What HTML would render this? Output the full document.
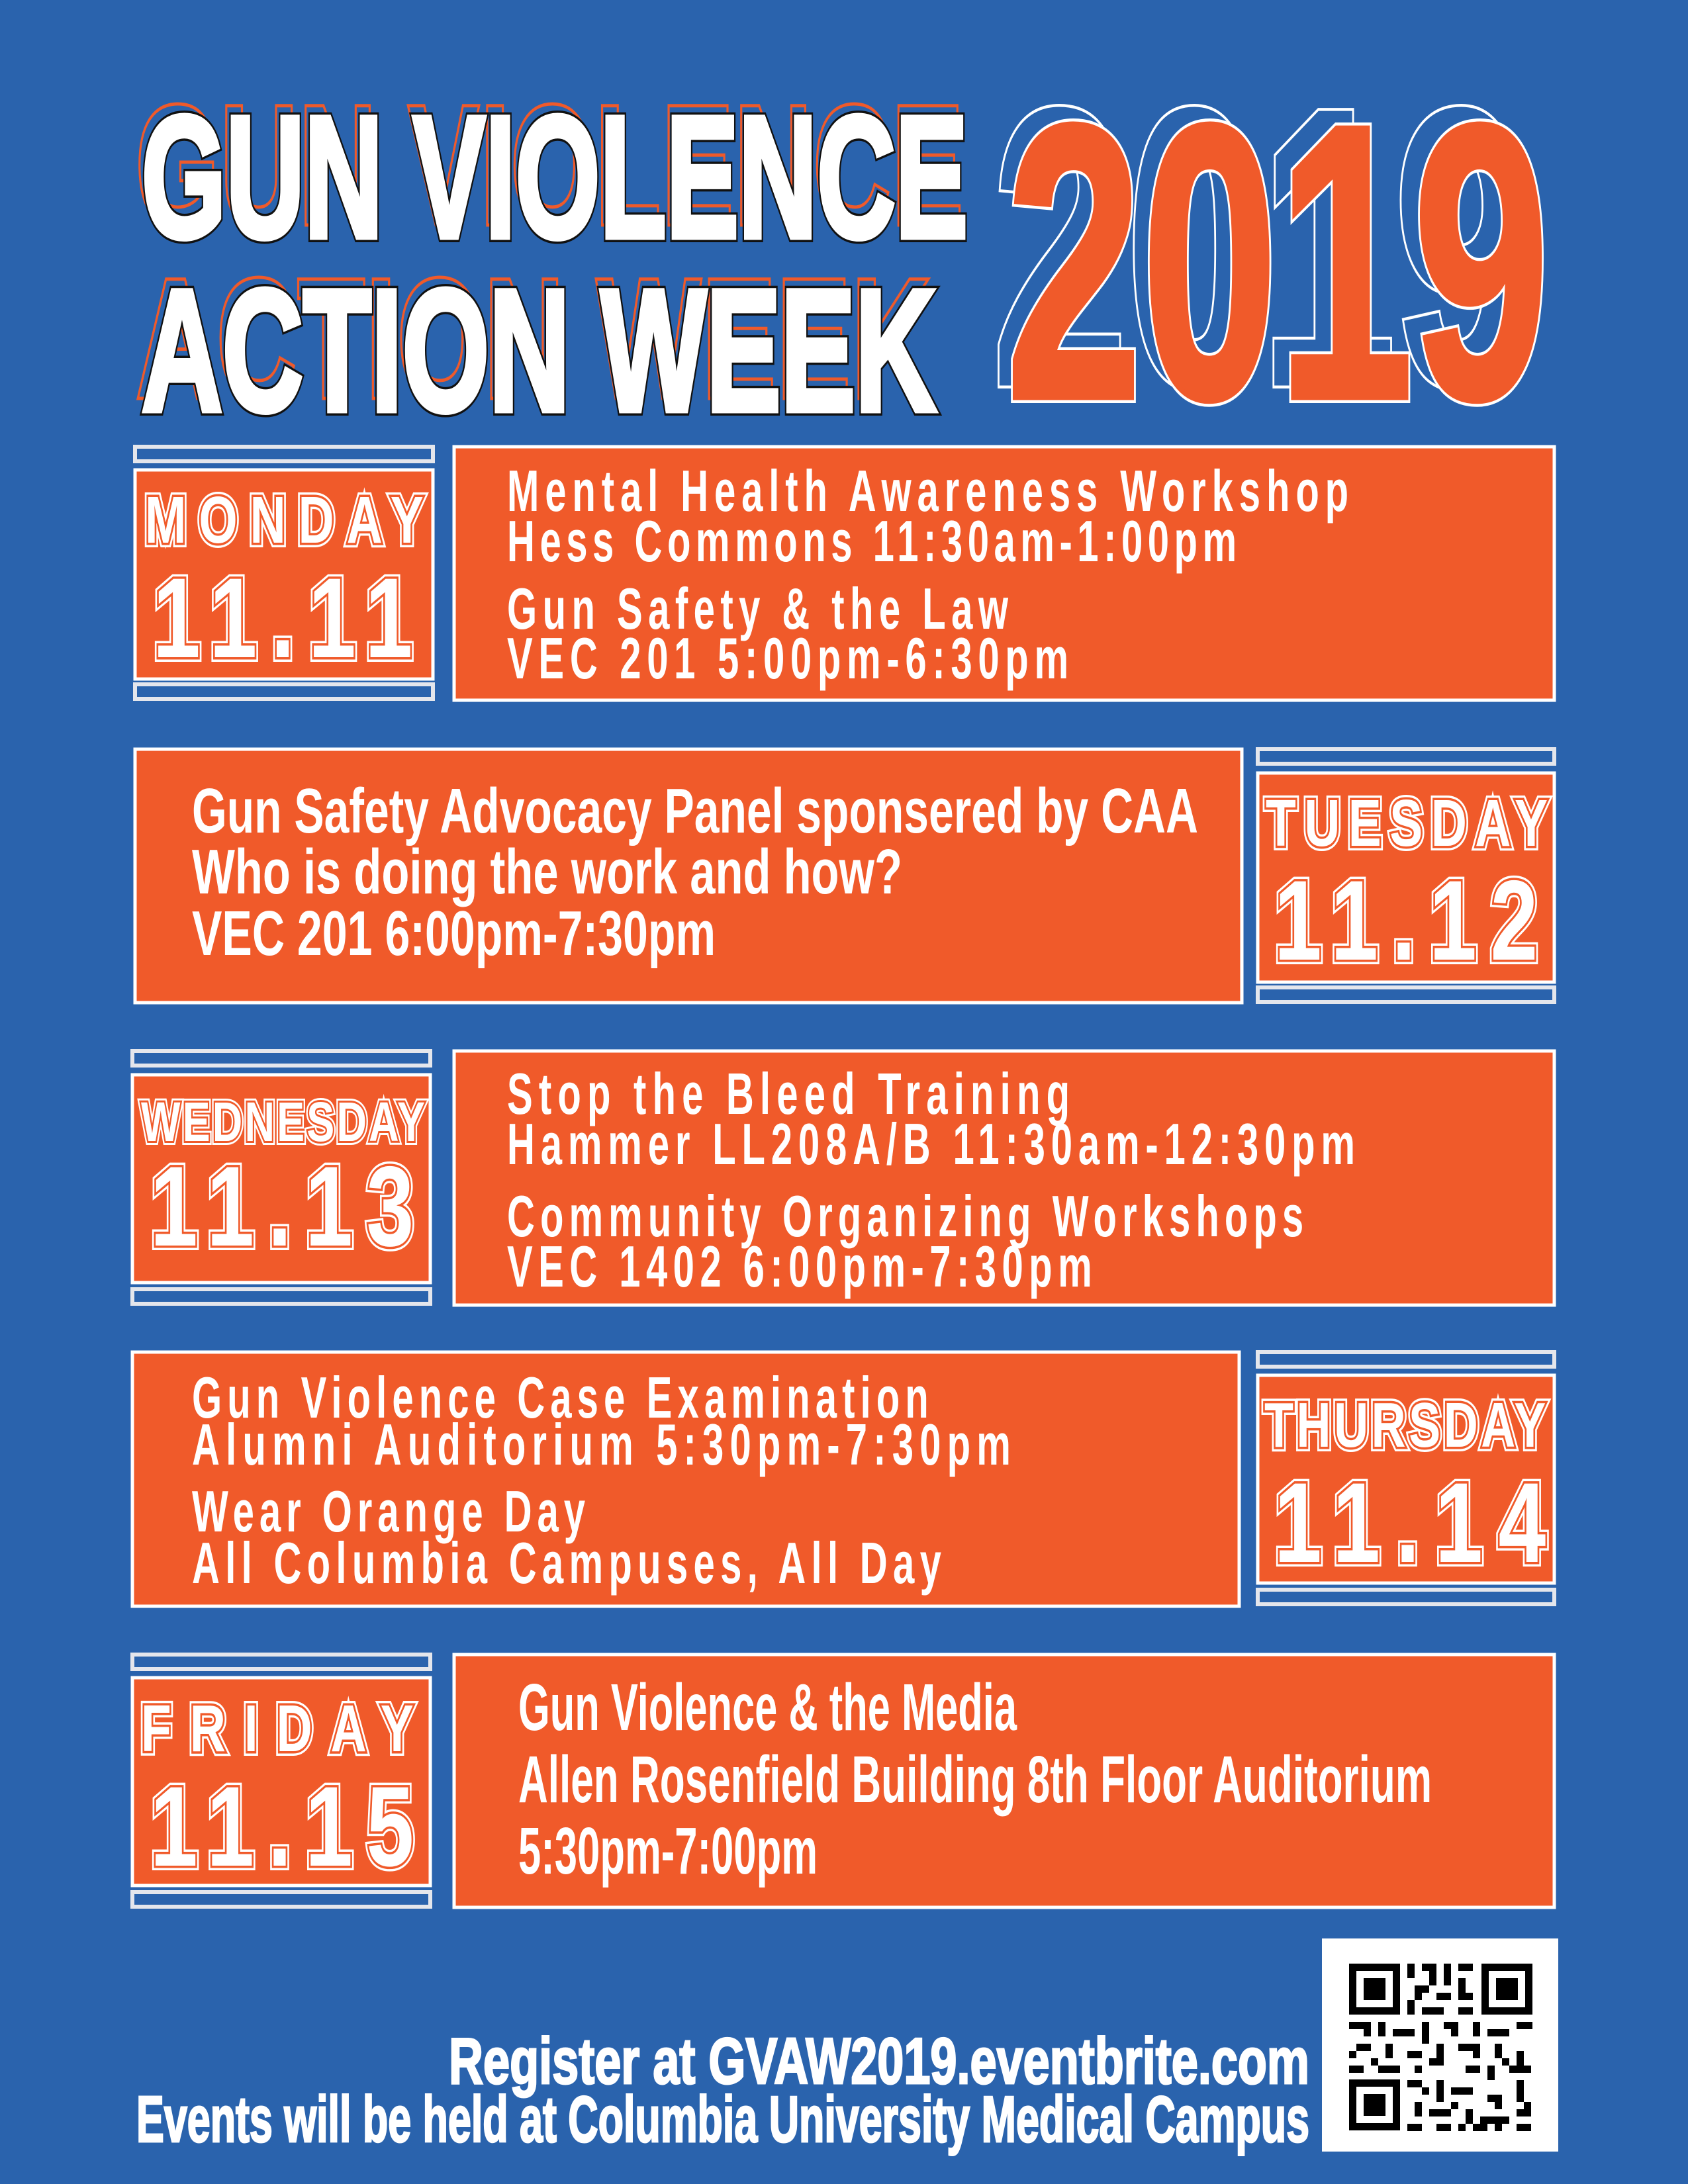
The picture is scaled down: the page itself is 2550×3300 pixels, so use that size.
<!DOCTYPE html>
<html><head><meta charset="utf-8"><style>
html,body{margin:0;padding:0;background:#2a63ad;}
svg{display:block;}
.c{font-family:"Liberation Sans Narrow","Liberation Sans",sans-serif;font-weight:bold;}
.w{font-family:"Liberation Sans",sans-serif;font-weight:bold;}
</style></head><body>
<svg width="2550" height="3300" viewBox="0 0 2550 3300" xmlns="http://www.w3.org/2000/svg">
<defs>
<style>
.ev{fill:#fff;}
.box{fill:#f05a2a;stroke:#fff;stroke-width:5;}
.bar{fill:#2a63ad;stroke:#e4e6ec;stroke-width:6;}
</style>
</defs>
<rect width="2550" height="3300" fill="#2a63ad"/>

<!-- Header -->
<g class="c" font-size="262">
<text x="204" y="340" textLength="1252" lengthAdjust="spacingAndGlyphs" fill="none" stroke="#f05a2a" stroke-width="5">GUN VIOLENCE</text>
<text x="214" y="358" textLength="1248" lengthAdjust="spacingAndGlyphs" fill="#fff" stroke="#111" stroke-width="16">GUN VIOLENCE</text>
<text x="214" y="358" textLength="1248" lengthAdjust="spacingAndGlyphs" fill="#fff" stroke="#fff" stroke-width="9">GUN VIOLENCE</text>
<text x="204" y="602" textLength="1204" lengthAdjust="spacingAndGlyphs" fill="none" stroke="#f05a2a" stroke-width="5">ACTION WEEK</text>
<text x="214" y="620" textLength="1200" lengthAdjust="spacingAndGlyphs" fill="#fff" stroke="#111" stroke-width="16">ACTION WEEK</text>
<text x="214" y="620" textLength="1200" lengthAdjust="spacingAndGlyphs" fill="#fff" stroke="#fff" stroke-width="9">ACTION WEEK</text>
</g>
<g class="c" font-size="590">
<text x="1500" y="578" textLength="810" lengthAdjust="spacingAndGlyphs" fill="#2a63ad" stroke="#fff" stroke-width="18">2019</text>
<text x="1500" y="578" textLength="810" lengthAdjust="spacingAndGlyphs" fill="#2a63ad" stroke="#2a63ad" stroke-width="9">2019</text>
<text x="1520" y="600" textLength="820" lengthAdjust="spacingAndGlyphs" fill="#f05a2a" stroke="#fff" stroke-width="18">2019</text>
<text x="1520" y="600" textLength="820" lengthAdjust="spacingAndGlyphs" fill="#f05a2a" stroke="#f05a2a" stroke-width="9">2019</text>
</g>

<!-- Row 1 -->
<rect class="bar" x="204" y="675" width="450" height="22"/>
<rect class="box" x="204" y="710" width="450" height="316"/>
<rect class="bar" x="204" y="1034" width="450" height="22"/>
<rect class="box" x="686" y="675" width="1662" height="383"/>
<g class="w">
<g font-size="100" transform="translate(219,820) scale(0.75,1)"><text textLength="561" lengthAdjust="spacing" fill="#fff" stroke="#fff" stroke-width="14">MONDAY</text><text textLength="561" lengthAdjust="spacing" fill="#fff" stroke="#f05a2a" stroke-width="7">MONDAY</text><text textLength="561" lengthAdjust="spacing" fill="#fff">MONDAY</text></g>
<g font-size="172" transform="translate(231,993) scale(0.75,1)"><text textLength="523" lengthAdjust="spacing" fill="#fff" stroke="#fff" stroke-width="14">11.11</text><text textLength="523" lengthAdjust="spacing" fill="#fff" stroke="#f05a2a" stroke-width="7">11.11</text><text textLength="523" lengthAdjust="spacing" fill="#fff">11.11</text></g>
</g>
<g class="c ev" font-size="88">
<text transform="translate(766,772) scale(0.66,1)" textLength="1926" lengthAdjust="spacing">Mental Health Awareness Workshop</text>
<text transform="translate(766,848) scale(0.66,1)" textLength="1670" lengthAdjust="spacing">Hess Commons 11:30am-1:00pm</text>
<text transform="translate(766,950) scale(0.66,1)" textLength="1147" lengthAdjust="spacing">Gun Safety &amp; the Law</text>
<text transform="translate(766,1025) scale(0.66,1)" textLength="1285" lengthAdjust="spacing">VEC 201 5:00pm-6:30pm</text>
</g>

<!-- Row 2 -->
<rect class="box" x="204" y="1132" width="1672" height="383"/>
<rect class="bar" x="1900" y="1132" width="448" height="22"/>
<rect class="box" x="1900" y="1168" width="448" height="316"/>
<rect class="bar" x="1900" y="1492" width="448" height="22"/>
<g class="w">
<g font-size="100" transform="translate(1912,1278) scale(0.75,1)"><text textLength="568" lengthAdjust="spacing" fill="#fff" stroke="#fff" stroke-width="14">TUESDAY</text><text textLength="568" lengthAdjust="spacing" fill="#fff" stroke="#f05a2a" stroke-width="7">TUESDAY</text><text textLength="568" lengthAdjust="spacing" fill="#fff">TUESDAY</text></g>
<g font-size="172" transform="translate(1925,1450) scale(0.75,1)"><text textLength="531" lengthAdjust="spacing" fill="#fff" stroke="#fff" stroke-width="14">11.12</text><text textLength="531" lengthAdjust="spacing" fill="#fff" stroke="#f05a2a" stroke-width="7">11.12</text><text textLength="531" lengthAdjust="spacing" fill="#fff">11.12</text></g>
</g>
<g class="c ev" font-size="96">
<text x="290" y="1258" textLength="1520" lengthAdjust="spacingAndGlyphs">Gun Safety Advocacy Panel sponsered by CAA</text>
<text x="290" y="1350" textLength="1073" lengthAdjust="spacingAndGlyphs">Who is doing the work and how?</text>
<text x="290" y="1443" textLength="791" lengthAdjust="spacingAndGlyphs">VEC 201 6:00pm-7:30pm</text>
</g>

<!-- Row 3 -->
<rect class="bar" x="200" y="1588" width="450" height="22"/>
<rect class="box" x="200" y="1624" width="450" height="314"/>
<rect class="bar" x="200" y="1948" width="450" height="22"/>
<rect class="box" x="686" y="1588" width="1662" height="384"/>
<g class="w">
<g font-size="84" transform="translate(213,1724) scale(0.75,1)"><text textLength="572" lengthAdjust="spacing" fill="#fff" stroke="#fff" stroke-width="12">WEDNESDAY</text><text textLength="572" lengthAdjust="spacing" fill="#fff" stroke="#f05a2a" stroke-width="6">WEDNESDAY</text><text textLength="572" lengthAdjust="spacing" fill="#fff">WEDNESDAY</text></g>
<g font-size="172" transform="translate(227,1882) scale(0.75,1)"><text textLength="531" lengthAdjust="spacing" fill="#fff" stroke="#fff" stroke-width="14">11.13</text><text textLength="531" lengthAdjust="spacing" fill="#fff" stroke="#f05a2a" stroke-width="7">11.13</text><text textLength="531" lengthAdjust="spacing" fill="#fff">11.13</text></g>
</g>
<g class="c ev" font-size="88">
<text transform="translate(766,1683) scale(0.66,1)" textLength="1288" lengthAdjust="spacing">Stop the Bleed Training</text>
<text transform="translate(766,1759) scale(0.66,1)" textLength="1941" lengthAdjust="spacing">Hammer LL208A/B 11:30am-12:30pm</text>
<text transform="translate(766,1868) scale(0.66,1)" textLength="1823" lengthAdjust="spacing">Community Organizing Workshops</text>
<text transform="translate(766,1944) scale(0.66,1)" textLength="1339" lengthAdjust="spacing">VEC 1402 6:00pm-7:30pm</text>
</g>

<!-- Row 4 -->
<rect class="box" x="200" y="2043" width="1672" height="384"/>
<rect class="bar" x="1900" y="2043" width="448" height="22"/>
<rect class="box" x="1900" y="2078" width="448" height="314"/>
<rect class="bar" x="1900" y="2402" width="448" height="22"/>
<g class="w">
<g font-size="96" transform="translate(1910,2186) scale(0.75,1)"><text textLength="567" lengthAdjust="spacing" fill="#fff" stroke="#fff" stroke-width="14">THURSDAY</text><text textLength="567" lengthAdjust="spacing" fill="#fff" stroke="#f05a2a" stroke-width="7">THURSDAY</text><text textLength="567" lengthAdjust="spacing" fill="#fff">THURSDAY</text></g>
<g font-size="172" transform="translate(1925,2360) scale(0.75,1)"><text textLength="547" lengthAdjust="spacing" fill="#fff" stroke="#fff" stroke-width="14">11.14</text><text textLength="547" lengthAdjust="spacing" fill="#fff" stroke="#f05a2a" stroke-width="7">11.14</text><text textLength="547" lengthAdjust="spacing" fill="#fff">11.14</text></g>
</g>
<g class="c ev" font-size="88">
<text transform="translate(290,2142) scale(0.66,1)" textLength="1686" lengthAdjust="spacing">Gun Violence Case Examination</text>
<text transform="translate(290,2213) scale(0.66,1)" textLength="1874" lengthAdjust="spacing">Alumni Auditorium 5:30pm-7:30pm</text>
<text transform="translate(290,2314) scale(0.66,1)" textLength="900" lengthAdjust="spacing">Wear Orange Day</text>
<text transform="translate(290,2392) scale(0.66,1)" textLength="1715" lengthAdjust="spacing">All Columbia Campuses, All Day</text>
</g>

<!-- Row 5 -->
<rect class="bar" x="200" y="2500" width="450" height="22"/>
<rect class="box" x="200" y="2535" width="450" height="314"/>
<rect class="bar" x="200" y="2859" width="450" height="22"/>
<rect class="box" x="686" y="2500" width="1662" height="382"/>
<g class="w">
<g font-size="100" transform="translate(213,2646) scale(0.75,1)"><text textLength="549" lengthAdjust="spacing" fill="#fff" stroke="#fff" stroke-width="14">FRIDAY</text><text textLength="549" lengthAdjust="spacing" fill="#fff" stroke="#f05a2a" stroke-width="7">FRIDAY</text><text textLength="549" lengthAdjust="spacing" fill="#fff">FRIDAY</text></g>
<g font-size="172" transform="translate(227,2819) scale(0.75,1)"><text textLength="531" lengthAdjust="spacing" fill="#fff" stroke="#fff" stroke-width="14">11.15</text><text textLength="531" lengthAdjust="spacing" fill="#fff" stroke="#f05a2a" stroke-width="7">11.15</text><text textLength="531" lengthAdjust="spacing" fill="#fff">11.15</text></g>
</g>
<g class="c ev" font-size="100">
<text x="783" y="2614" textLength="753" lengthAdjust="spacingAndGlyphs">Gun Violence &amp; the Media</text>
<text x="783" y="2723" textLength="1380" lengthAdjust="spacingAndGlyphs">Allen Rosenfield Building 8th Floor Auditorium</text>
<text x="783" y="2831" textLength="452" lengthAdjust="spacingAndGlyphs">5:30pm-7:00pm</text>
</g>

<!-- Footer -->
<g class="c ev" font-size="98" stroke="#fff" stroke-width="3">
<text x="678" y="3148" textLength="1300" lengthAdjust="spacingAndGlyphs">Register at GVAW2019.eventbrite.com</text>
<text x="206" y="3236" textLength="1772" lengthAdjust="spacingAndGlyphs">Events will be held at Columbia University Medical Campus</text>
</g>

<!-- QR -->
<rect x="1997" y="2929" width="357" height="322" fill="#fff"/>
<g fill="#000" transform="translate(2038,2967)">
<path d="M0 0h77v77h-77zM11 11v55h55v-55zM22 22h33v33h-33z" fill-rule="evenodd"/>
<path d="M200 0h77v77h-77zM211 11v55h55v-55zM222 22h33v33h-33z" fill-rule="evenodd"/>
<path d="M0 175h77v77h-77zM11 186v55h55v-55zM22 197h33v33h-33z" fill-rule="evenodd"/>
<path d="M88 0h11v22h-11zM110 0h22v11h-22zM143 0h11v33h-11zM165 0h22v11h-22zM99 33h22v11h-22zM132 44h22v11h-22zM165 22h11v33h-11zM88 55h11v22h-11zM110 66h33v11h-33zM165 66h22v11h-22zM121 11h11v22h-11zM99 44h11v11h-11zM176 44h11v11h-11z
M0 88h33v11h-33zM44 88h11v22h-11zM66 99h33v11h-33zM110 88h11v22h-11zM143 88h22v11h-22zM187 88h11v22h-11zM209 99h33v11h-33zM253 88h24v11h-24zM22 99h11v11h-11zM154 99h11v11h-11z
M11 121h22v11h-22zM55 121h11v22h-11zM88 132h22v11h-22zM132 121h11v22h-11zM165 121h33v11h-33zM220 121h11v22h-11zM253 132h11v22h-11zM0 132h11v11h-11zM110 110h11v11h-11zM187 132h11v11h-11z
M0 154h22v11h-22zM44 154h33v11h-33zM99 154h11v11h-11zM121 143h22v11h-22zM176 154h22v11h-22zM209 154h11v22h-11zM242 154h33v11h-33zM33 143h11v11h-11zM231 143h11v11h-11z
M88 176h22v11h-22zM132 176h11v33h-11zM154 187h33v11h-33zM209 198h22v11h-22zM253 176h11v33h-11zM110 187h11v11h-11zM264 209h11v11h-11z
M99 209h11v22h-11zM121 220h33v11h-33zM176 220h11v22h-11zM198 231h44v11h-44zM253 220h22v11h-22zM154 209h11v11h-11zM220 209h11v11h-11z
M88 242h22v11h-22zM132 242h22v11h-22zM165 242h11v11h-11zM220 242h11v11h-11zM253 242h22v11h-22zM187 242h22v11h-22z"/>
</g>
</svg>
</body></html>
